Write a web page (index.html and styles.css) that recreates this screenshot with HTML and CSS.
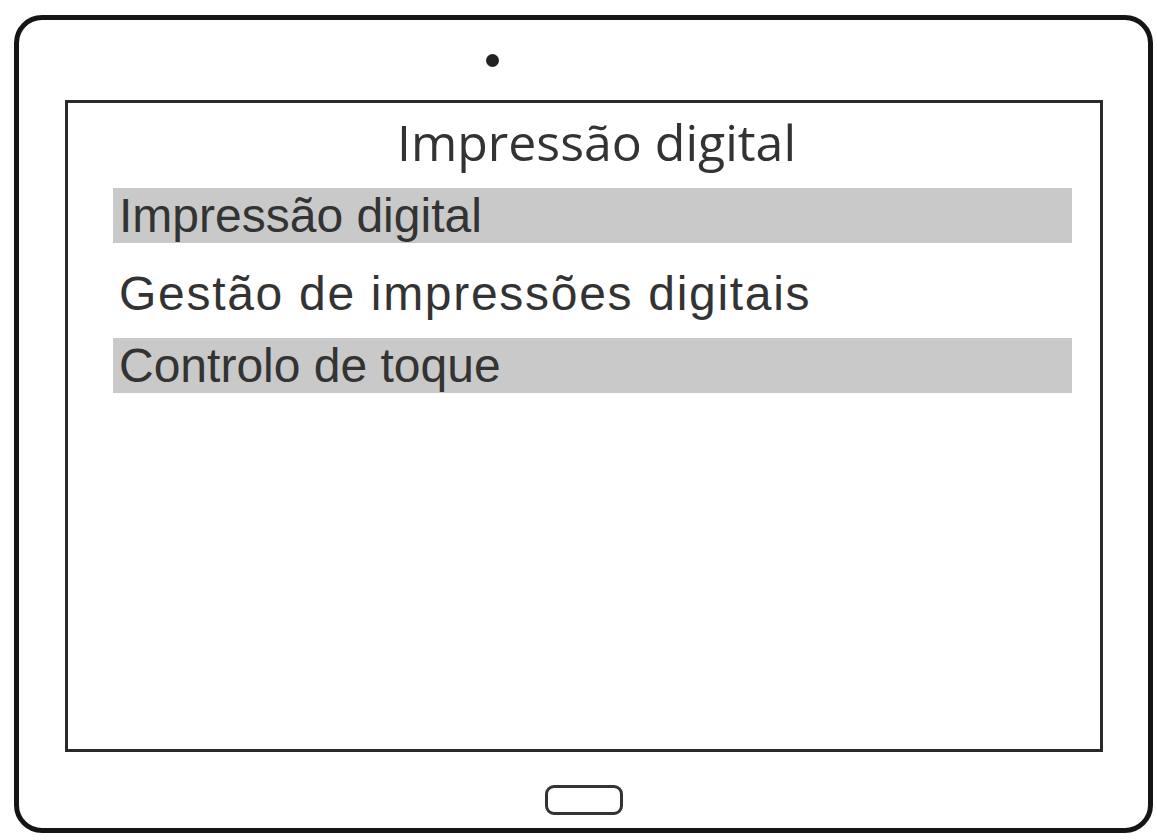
FILE: index.html
```html
<!DOCTYPE html>
<html lang="pt">
<head>
<meta charset="utf-8">
<title>Impressão digital</title>
<link rel="stylesheet" href="styles.css">
</head>
<body>
<div class="device">
  <div class="bezel-top"><span class="camera"></span></div>
  <div class="screen">
    <div class="title">Impressão digital</div>
    <ul class="menu">
      <li class="item highlighted">Impressão digital</li>
      <li class="item spaced">Gestão de impressões digitais</li>
      <li class="item highlighted">Controlo de toque</li>
    </ul>
  </div>
  <div class="bezel-bottom"><span class="home"></span></div>
</div>
</body>
</html>
```
FILE: styles.css
```css
html, body {
  margin: 0;
  padding: 0;
  background: #ffffff;
}
body {
  width: 1157px;
  height: 840px;
  overflow: hidden;
}
.device {
  box-sizing: border-box;
  margin: 15px 0 0 14px;
  width: 1139px;
  height: 818px;
  border: 5px solid #151515;
  border-radius: 28px;
  display: flex;
  flex-direction: column;
}
.bezel-top {
  height: 80px;
  flex: none;
  position: relative;
}
.camera {
  position: absolute;
  left: 467px;
  top: 34px;
  width: 13px;
  height: 13px;
  border-radius: 50%;
  background: #222;
}
.screen {
  box-sizing: border-box;
  flex: none;
  margin-left: 46px;
  width: 1038px;
  height: 652px;
  border: 3px solid #2a2a2a;
  padding: 14px 28px 0 45px;
  display: flex;
  flex-direction: column;
}
.title {
  font-family: "Open Sans", "Noto Sans", sans-serif;
  font-size: 50px;
  line-height: 50px;
  color: #333;
  text-align: center;
  padding-left: 8px;
  margin-bottom: 21px;
}
.menu {
  list-style: none;
  margin: 0;
  padding: 0;
  display: flex;
  flex-direction: column;
  gap: 20px;
}
.item {
  box-sizing: border-box;
  height: 55px;
  line-height: 56px;
  padding-left: 6px;
  font-family: "Liberation Sans", Arial, sans-serif;
  font-size: 48px;
  color: #333;
  white-space: nowrap;
}
.highlighted {
  background: #c9c9c9;
}
.spaced {
  letter-spacing: 1.7px;
  padding-top: 3px;
}
.bezel-bottom {
  flex: 1;
  display: flex;
  justify-content: center;
  align-items: flex-start;
}
.home {
  box-sizing: border-box;
  margin-top: 33px;
  width: 78px;
  height: 30px;
  border: 3px solid #333;
  border-radius: 9px;
}
```
